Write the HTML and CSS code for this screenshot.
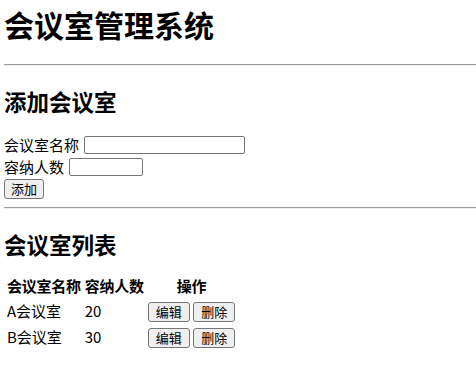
FILE: index.html
```html
<!DOCTYPE html>
<html lang="zh-CN">
<head>
    <meta charset="UTF-8">
    <meta name="viewport" content="width=device-width, initial-scale=1.0">
    <title>会议室管理系统</title>
    <link rel="stylesheet" href="styles.css">
</head>
<body>
    <h1>会议室管理系统</h1>
    <hr>

    <h2>添加会议室</h2>
    <form class="room-form">
        <div class="field">
            <label for="room-name">会议室名称</label>
            <input type="text" id="room-name" class="input-name">
        </div>
        <div class="field">
            <label for="room-capacity">容纳人数</label>
            <input type="number" id="room-capacity" class="input-capacity">
        </div>
        <div class="field">
            <button type="button" class="btn">添加</button>
        </div>
    </form>
    <hr>

    <h2>会议室列表</h2>
    <table class="room-table">
        <thead>
            <tr>
                <th>会议室名称</th>
                <th>容纳人数</th>
                <th>操作</th>
            </tr>
        </thead>
        <tbody>
            <tr>
                <td>A会议室</td>
                <td>20</td>
                <td class="actions"><button class="btn">编辑</button> <button class="btn">删除</button></td>
            </tr>
            <tr>
                <td>B会议室</td>
                <td>30</td>
                <td class="actions"><button class="btn">编辑</button> <button class="btn">删除</button></td>
            </tr>
        </tbody>
    </table>
</body>
</html>
```

FILE: styles.css
```css
body {
    margin: 0;
    padding: 4px 0 0 4px;
    font-family: "Microsoft YaHei", "Noto Sans CJK SC", sans-serif;
    font-size: 15px;
    line-height: 20px;
    color: #000000;
    background: #ffffff;
}

h1 {
    font-size: 30px;
    line-height: 40px;
    margin: 0 0 20px;
}

h2 {
    font-size: 22.5px;
    line-height: 30px;
    margin: 20px 0 14px;
}

hr {
    margin: 0;
    border: none;
    border-top: 1px solid #9a9a9a;
    border-bottom: 1px solid #eeeeee;
}

.room-form {
    padding-top: 4px;
    margin-bottom: 7px;
}

.field {
    display: flex;
    align-items: center;
    gap: 5px;
    height: 22px;
}

input {
    box-sizing: border-box;
    height: 18px;
    padding: 1px 2px;
    border: 1px solid #767676;
    border-radius: 2px;
    font-family: inherit;
    font-size: 12.5px;
    -moz-appearance: textfield;
}

input::-webkit-outer-spin-button,
input::-webkit-inner-spin-button {
    -webkit-appearance: none;
    margin: 0;
}

.input-name {
    width: 161px;
}

.input-capacity {
    width: 74px;
}

.btn {
    box-sizing: border-box;
    height: 20px;
    padding: 0 6px;
    border: 1px solid #767676;
    border-radius: 3px;
    background: #efefef;
    color: #000000;
    font-family: inherit;
    font-size: 13px;
    line-height: 18px;
}

.room-table {
    margin-top: 1px;
    border-spacing: 2px;
}

.room-table th,
.room-table td {
    padding: 1px;
    line-height: 20px;
}

.room-table th {
    letter-spacing: -0.25px;
}

.room-table td {
    height: 20px;
}

.actions {
    white-space: nowrap;
}

.actions .btn {
    padding: 0 7px;
    vertical-align: middle;
}
```
